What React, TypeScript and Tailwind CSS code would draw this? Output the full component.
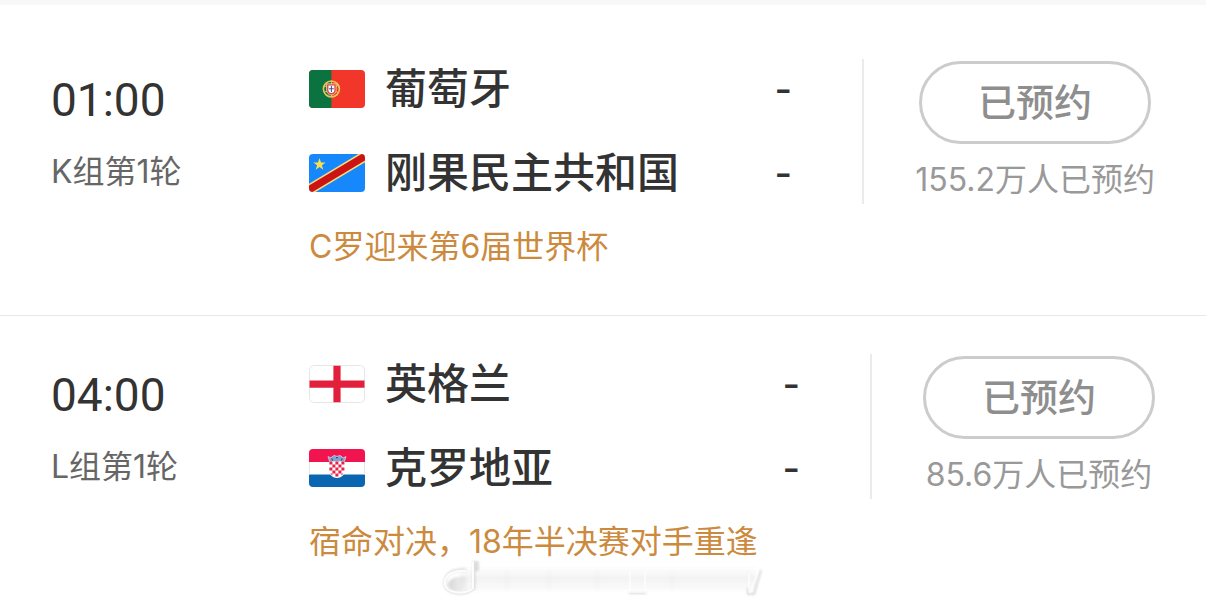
import type { ReactNode } from 'react';

interface Team {
  name: string;
  flag: ReactNode;
  score: string;
}

interface Match {
  time: string;
  round: string;
  teams: Team[];
  note: string;
  booked: string;
}

const FLAG = 'h-[38px] w-14 shrink-0 rounded-[4px]';

function PortugalFlag() {
  return (
    <svg className={FLAG} viewBox="0 0 56 38" preserveAspectRatio="none" aria-hidden="true">
      <rect width="56" height="38" fill="#f2362a" />
      <rect width="22.4" height="38" fill="#0b7340" />
      <circle cx="22.4" cy="19" r="8" fill="none" stroke="#e9c65a" strokeWidth="1.6" />
      <path d="M15 15.5l14.6 7.4M15 22.5l14.6-7.4M22.4 11v16" stroke="#e9c65a" strokeWidth="1" />
      <path d="M17.6 13.8h9.6v6.4a4.8 4.8 0 0 1-9.6 0z" fill="#e0443c" stroke="#f3dfa0" strokeWidth=".8" />
      <path d="M19.4 15.6h6v4.4a3 3 0 0 1-6 0z" fill="#fff" />
      <path d="M22.4 16v6M20 18.8h4.8" stroke="#3b5ba0" strokeWidth="1.1" />
    </svg>
  );
}

function CongoFlag() {
  return (
    <svg className={FLAG} viewBox="0 0 56 38" preserveAspectRatio="none" aria-hidden="true">
      <rect width="56" height="38" fill="#1788fb" />
      <path d="M0 29.8L49.5 0H56v8.2L6.5 38H0z" fill="#f6dc7c" />
      <path d="M0 31.6L52.5 0H56v6.4L3.5 38H0z" fill="#cc1512" />
      <path d="M10.5 4l1.5 4.4h4.6l-3.7 2.8 1.4 4.5-3.8-2.7-3.8 2.7 1.4-4.5-3.7-2.8H9z" fill="#f9e04f" />
    </svg>
  );
}

function EnglandFlag() {
  return (
    <svg className={FLAG} viewBox="0 0 56 38" preserveAspectRatio="none" aria-hidden="true">
      <rect x=".5" y=".5" width="55" height="37" rx="4" fill="#fff" stroke="#e6e6e6" />
      <path d="M24.4 .8h7.2v36.4h-7.2z" fill="#e3203c" />
      <path d="M.5 15.4h55v7.4H.5z" fill="#e3203c" />
    </svg>
  );
}

function CroatiaFlag() {
  return (
    <svg className={FLAG} viewBox="0 0 56 38" preserveAspectRatio="none" aria-hidden="true">
      <rect width="56" height="38" fill="#fff" />
      <rect width="56" height="13" fill="#f2144f" />
      <rect y="25.5" width="56" height="12.5" fill="#0b66b2" />
      <path d="M.5 13v12.5M55.5 13v12.5" stroke="#e6e6e6" />
      <path d="M19 7.6l2.8 1.2L25 6.4l3 1 3-1 3.2 2.4L37 7.6l-1.6 5H20.6z" fill="#7fa3cf" stroke="#e8eef6" strokeWidth=".6" />
      <path d="M22.5 9.5l1.4 2M27 8.6h2M33.4 9.5l-1.2 2" stroke="#37507f" strokeWidth="1.2" />
      <path d="M20.4 12.4h15.2v9.4a7.6 7.2 0 0 1-15.2 0z" fill="#fff" />
      <path
        d="M20.4 12.4h3v3h-3zM26.4 12.4h3v3h-3zM32.4 12.4h3v3h-3zM23.4 15.4h3v3h-3zM29.4 15.4h3v3h-3zM20.4 18.4h3v3h-3zM26.4 18.4h3v3h-3zM32.4 18.4h3v3h-3zM23.4 21.4h3v3h-3zM29.4 21.4h3v3h-3zM26.4 24.4h3v3h-3zM21.2 24.4h2.2v2zM32.4 24.4h2l-2 2z"
        fill="#e5234b"
      />
    </svg>
  );
}

const MATCHES: Match[] = [
  {
    time: '01:00',
    round: 'K组第1轮',
    teams: [
      { name: '葡萄牙', flag: <PortugalFlag />, score: '-' },
      { name: '刚果民主共和国', flag: <CongoFlag />, score: '-' },
    ],
    note: 'C罗迎来第6届世界杯',
    booked: '155.2万人已预约',
  },
  {
    time: '04:00',
    round: 'L组第1轮',
    teams: [
      { name: '英格兰', flag: <EnglandFlag />, score: '-' },
      { name: '克罗地亚', flag: <CroatiaFlag />, score: '-' },
    ],
    note: '宿命对决，18年半决赛对手重逢',
    booked: '85.6万人已预约',
  },
];

function MatchRow({ match }: { match: Match }) {
  return (
    <li className="flex items-start border-b border-[#e8e8e8] pt-[38px] pb-12 pl-[51px] last:border-b-0">
      <div className="w-[258px] shrink-0 pt-[11px]">
        <p className="font-['Roboto',sans-serif] text-[46px] leading-[60px] text-[#333]">{match.time}</p>
        <p className="mt-[22px] text-[32px] leading-10 text-[#666]">{match.round}</p>
      </div>

      <div className="min-w-0 flex-1">
        <div className="flex flex-col gap-6 pr-[70px]">
          {match.teams.map((team) => (
            <div key={team.name} className="flex h-[60px] items-center">
              {team.flag}
              <span className="ml-5 flex-1 text-[42px] leading-[60px] font-medium text-[#333]">{team.name}</span>
              <span className="text-[38px] leading-[60px] font-medium text-[#333]">{team.score}</span>
            </div>
          ))}
        </div>
        <p className="mt-6 text-[32px] leading-10 whitespace-nowrap text-[#cb8a3e]">{match.note}</p>
      </div>

      <div className="flex h-[145px] shrink-0 flex-col items-center border-l-2 border-[#ebebeb] px-[51px] pt-0.5">
        <button
          type="button"
          className="h-[83px] w-[232px] rounded-full border-[3px] border-[#ccc] text-[38px] font-medium text-[#8e8e8e]"
        >
          已预约
        </button>
        <p className="mt-4 text-[32px] leading-10 text-[#999]">{match.booked}</p>
      </div>
    </li>
  );
}

// Faded signature stamped over the bottom edge of the list
function Watermark() {
  return (
    <svg
      className="pointer-events-none absolute bottom-2 left-[440px] h-[44px] w-[324px]"
      viewBox="0 0 324 44"
      fill="none"
      aria-hidden="true"
    >
      <defs>
        <linearGradient id="smear" x1="0" y1="0" x2="0" y2="1">
          <stop offset="0" stopColor="#777" stopOpacity="0" />
          <stop offset=".5" stopColor="#777" stopOpacity=".09" />
          <stop offset="1" stopColor="#777" stopOpacity=".01" />
        </linearGradient>
        <linearGradient id="bowl" x1="0" y1="0" x2="1" y2="0">
          <stop offset="0" stopColor="#999" stopOpacity=".4" />
          <stop offset="1" stopColor="#999" stopOpacity=".08" />
        </linearGradient>
        <filter id="soft" x="-10%" y="-20%" width="120%" height="140%">
          <feGaussianBlur stdDeviation="1" />
        </filter>
      </defs>
      <rect x="20" y="8" width="296" height="26" fill="url(#smear)" filter="url(#soft)" />
      <g filter="url(#soft)">
        <path d="M34 3v27c-8 8-29 7-29-5C5 15 14 11 26 12" stroke="#999" strokeWidth="3" strokeOpacity=".3" />
        <path d="M8 26c2-7 10-8 19-7v12c-8 4-19 2-19-5z" fill="url(#bowl)" />
        <path d="M37 3v10" stroke="#999" strokeWidth="4" strokeOpacity=".3" />
        <path d="M189 35h17M308 30v6h6l7-24" stroke="#aaa" strokeWidth="2" strokeOpacity=".45" />
        <path d="M67 12v20M109 12v20M157 12v20M232 12v20" stroke="#aaa" strokeWidth="4" strokeOpacity=".04" />
      </g>
      <path d="M33 4v26c-7 7-28 6-28-5C5 16 14 12 26 13" stroke="#fff" strokeWidth="2" strokeOpacity=".9" />
      <path d="M190 13v21h15V13M309 16v19M318 14l-8 21" stroke="#fff" strokeWidth="2" strokeOpacity=".55" />
    </svg>
  );
}

export default function App() {
  return (
    <main className="relative overflow-hidden border-t-[5px] border-[#f8f8f8] bg-white pt-4 font-['Inter','Noto_Sans_CJK_SC',sans-serif]">
      <ul>
        {MATCHES.map((match) => (
          <MatchRow key={match.time} match={match} />
        ))}
      </ul>
      <Watermark />
    </main>
  );
}
